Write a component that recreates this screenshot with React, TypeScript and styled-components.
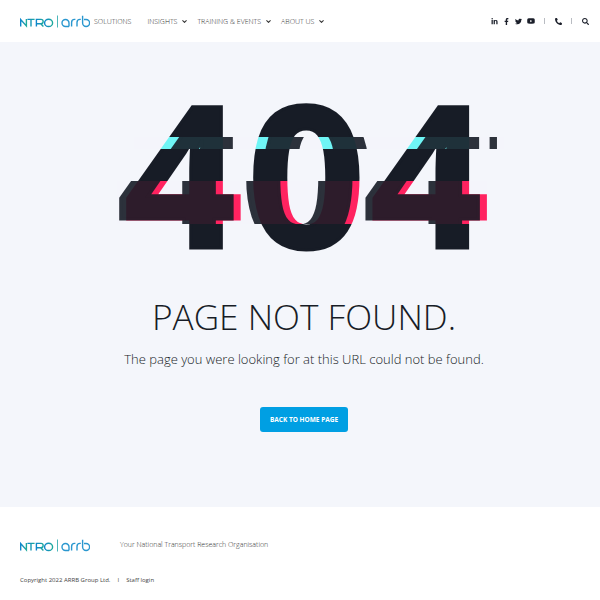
import { FC } from 'react'
import styled, { createGlobalStyle } from 'styled-components'
import { ChevronDown } from 'lucide-react'
import {
  FaFacebookF,
  FaLinkedinIn,
  FaPhoneAlt,
  FaSearch,
  FaTwitter,
  FaYoutube,
} from 'react-icons/fa'

const GlobalStyle = createGlobalStyle`
  html, body {
    margin: 0;
    padding: 0;
    background: #ffffff;
  }
  body {
    font-family: 'Open Sans', sans-serif;
  }
`

const Logo: FC = () => (
  <LogoSvg viewBox="0 0 70 13" fill="none" strokeWidth={1.4}>
    <defs>
      <linearGradient id="ntro" x1="0" x2="1" y1="0" y2="0">
        <stop offset="0" stopColor="#0f86cc" />
        <stop offset="1" stopColor="#1eaa9c" />
      </linearGradient>
    </defs>
    <g stroke="url(#ntro)">
      <path d="M0.7 11.5V4.6L6.4 10.9V4" />
      <path d="M7.4 4.4H14.6M11 4.4V11.5" />
      <path d="M16.4 11.5V4.4H21a2 2 0 0 1 0 4.3H16.4M20.8 8.7L23.4 11.5" />
      <ellipse cx="28.6" cy="7.9" rx="4" ry="3.6" />
    </g>
    <path d="M37.5 0.5V12.5" stroke="#1fa3a8" strokeWidth={0.8} />
    <g stroke="#2a97cf">
      <path d="M49 11.5V8a3.5 3.5 0 1 0-3.5 3.5H49" />
      <path d="M51.6 11.5V7.4a3 3 0 0 1 3-3h0.8" />
      <path d="M57 11.5V7.4a3 3 0 0 1 3-3h0.8" />
      <path d="M62.6 0.8V8a3.5 3.5 0 1 0 3.5-3.5H64" />
    </g>
  </LogoSvg>
)

const App: FC = () => {
  return (
    <Page>
      <GlobalStyle />
      <Header>
        <Logo />
        <Nav>
          <NavItem>SOLUTIONS</NavItem>
          <NavItem>
            INSIGHTS
            <ChevronDown size={7} strokeWidth={3.5} color="#333" />
          </NavItem>
          <NavItem>
            TRAINING &amp; EVENTS
            <ChevronDown size={7} strokeWidth={3.5} color="#333" />
          </NavItem>
          <NavItem>
            ABOUT US
            <ChevronDown size={7} strokeWidth={3.5} color="#333" />
          </NavItem>
        </Nav>
        <Tools>
          <FaLinkedinIn size={7} />
          <FaFacebookF size={7} />
          <FaTwitter size={7} />
          <FaYoutube size={8} />
          <Divider />
          <FaPhoneAlt size={7} />
          <Divider />
          <FaSearch size={7} />
        </Tools>
      </Header>

      <Main>
        <Glitch>
          <BaseText>404</BaseText>
          <CyanSlice>404</CyanSlice>
          <PinkSlice>404</PinkSlice>
          <UpperShift>404</UpperShift>
          <LowerShift>404</LowerShift>
          <StrayBlock />
        </Glitch>
        <Title>PAGE NOT FOUND.</Title>
        <Message>The page you were looking for at this URL could not be found.</Message>
        <HomeButton>BACK TO HOME PAGE</HomeButton>
      </Main>

      <Footer>
        <FooterTop>
          <Logo />
          <Tagline>Your National Transport Research Organisation</Tagline>
        </FooterTop>
        <Legal>
          <span>Copyright 2022 ARRB Group Ltd.</span>
          <LegalBar>I</LegalBar>
          <span>Staff login</span>
        </Legal>
      </Footer>
    </Page>
  )
}

const Page = styled.div`
  width: 600px;
  height: 600px;
  overflow: hidden;
  display: flex;
  flex-direction: column;
`

const LogoSvg = styled.svg`
  display: block;
  width: 70px;
  height: 13px;
  flex: none;
`

const Header = styled.header`
  height: 42px;
  flex: none;
  display: flex;
  align-items: center;
  padding: 0 11px 0 20px;
  background: #ffffff;
`

const Nav = styled.nav`
  display: flex;
  align-items: center;
  gap: 9px;
  margin-left: 4px;
`

const NavItem = styled.a`
  display: flex;
  align-items: center;
  gap: 4px;
  font-size: 7px;
  font-weight: 300;
  color: #333333;
  white-space: nowrap;

  &:first-child {
    margin-right: 7px;
  }
`

const Tools = styled.div`
  display: flex;
  align-items: center;
  gap: 5px;
  margin-left: auto;
  color: #1b1f2a;
`

const Divider = styled.span`
  width: 1px;
  height: 6px;
  margin: 0 5px 0 4px;
  background: #b9bcc2;
`

const Main = styled.main`
  flex: 1;
  display: flex;
  flex-direction: column;
  align-items: center;
  padding: 30px 0 0 8px;
  background: #f4f6fb;
`

const Glitch = styled.div`
  position: relative;
  height: 200px;
  font-size: 197px;
  line-height: 200px;
  font-weight: 700;
  letter-spacing: 4.6px;
  white-space: nowrap;
  -webkit-text-stroke: 3px;
  transform: translateX(5px) scaleX(1.05);
`

const BaseText = styled.div`
  color: #171c26;
  clip-path: polygon(
    -60px 0, 500px 0, 500px 65px, -60px 65px,
    -60px 77px, 500px 77px, 500px 109px, -60px 109px,
    -60px 152px, 500px 152px, 500px 200px, -60px 200px
  );
`

const Slice = styled.div`
  position: absolute;
  top: 0;
  left: 0;
`

const CyanSlice = styled(Slice)`
  color: #6ff5f5;
  clip-path: inset(65px -60px 123px -60px);
`

const PinkSlice = styled(Slice)`
  color: #ff2461;
  clip-path: inset(109px -60px 48px -60px);
`

const UpperShift = styled(Slice)`
  color: #171c26;
  opacity: 0.9;
  transform: translateX(9.5px);
  clip-path: inset(65px -60px 123px -60px);
`

const LowerShift = styled(Slice)`
  color: #171c26;
  opacity: 0.9;
  transform: translateX(-6.7px);
  clip-path: inset(109px -60px 48px -60px);
`

const StrayBlock = styled.span`
  position: absolute;
  top: 65px;
  right: -3px;
  width: 7px;
  height: 12px;
  background: #2d323b;
`

const Title = styled.h1`
  margin: 22px 0 0;
  font-size: 35.2px;
  line-height: 44px;
  font-weight: 300;
  color: #171c26;
`

const Message = styled.p`
  margin: 11px 0 0;
  font-size: 13px;
  line-height: 20px;
  font-weight: 300;
  color: #171c26;
`

const HomeButton = styled.a`
  display: flex;
  align-items: center;
  justify-content: center;
  width: 88px;
  height: 25px;
  margin-top: 38px;
  border-radius: 3px;
  background: #009fe3;
  color: #ffffff;
  font-size: 6.5px;
  font-weight: 700;
`

const Footer = styled.footer`
  height: 93px;
  flex: none;
  padding: 32px 20px 0;
  box-sizing: border-box;
  background: #ffffff;
`

const FooterTop = styled.div`
  display: flex;
  align-items: center;
  gap: 30px;
`

const Tagline = styled.span`
  font-size: 7px;
  font-weight: 300;
  color: #333333;
  margin-top: -3px;
`

const Legal = styled.div`
  display: flex;
  align-items: center;
  margin-top: 24px;
  font-size: 6px;
  color: #444444;
`

const LegalBar = styled.span`
  margin: 0 7px;
`

export default App
